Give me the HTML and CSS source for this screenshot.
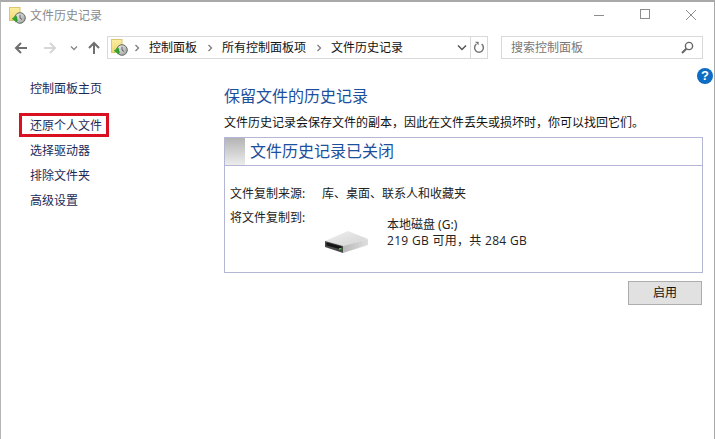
FILE: index.html
```html
<!DOCTYPE html>
<html lang="zh-CN">
<head>
<meta charset="utf-8">
<title>文件历史记录</title>
<link rel="stylesheet" href="styles.css">
</head>
<body>
<svg class="defs" width="0" height="0" aria-hidden="true">
  <defs>
    <linearGradient id="clk" x1="0" y1="0" x2="1" y2="1"><stop offset="0" stop-color="#f4f4f4"/><stop offset="1" stop-color="#9a9a9a"/></linearGradient>
    <linearGradient id="fold" x1="0" y1="0" x2="0" y2="1"><stop offset="0" stop-color="#fbeea0"/><stop offset="1" stop-color="#f0d775"/></linearGradient>
    <linearGradient id="drv" x1="0" y1="0" x2="1" y2="0"><stop offset="0" stop-color="#b9b9b9"/><stop offset="1" stop-color="#dedede"/></linearGradient>
    <linearGradient id="drvtop" x1="0" y1="0" x2="1" y2="1"><stop offset="0" stop-color="#f0f0f0"/><stop offset="1" stop-color="#d2d2d2"/></linearGradient>
    <symbol id="fh" viewBox="0 0 17 17">
      <rect x="0.5" y="0.5" width="10.5" height="13" fill="url(#fold)" stroke="#dcc56a"/>
      <circle cx="11" cy="11" r="5.3" fill="url(#clk)" stroke="#5f6b62"/>
      <path d="M11 7.8V11l2 1.4" fill="none" stroke="#555" stroke-width=".9"/>
      <path d="M7.5 8.5 3 12l3.2 1.2.4 2.3 2.2-1.6" fill="#2f9a2f"/>
      <path d="M3 11.8 6.6 8.6v5.8z" fill="#33a933"/>
    </symbol>
  </defs>
</svg>
<div class="window">
  <header class="titlebar">
    <svg class="app-icon" width="17" height="17"><use href="#fh"/></svg>
    <span class="title">文件历史记录</span>
    <div class="controls">
      <svg width="12" height="12" viewBox="0 0 12 12"><path d="M1 6.5h10" stroke="#8d8d8d" fill="none"/></svg>
      <svg width="12" height="12" viewBox="0 0 12 12"><rect x="1.5" y=".5" width="9" height="9" fill="none" stroke="#8d8d8d"/></svg>
      <svg width="12" height="12" viewBox="0 0 12 12"><path d="M1 1l10 10M11 1 1 11" stroke="#8d8d8d" fill="none"/></svg>
    </div>
  </header>
  <nav class="navbar">
    <div class="nav-buttons">
      <svg width="14" height="14" viewBox="0 0 14 14"><path d="M13 7H2M7 2 2 7l5 5" fill="none" stroke="#6f6f6f" stroke-width="2"/></svg>
      <svg class="forward" width="14" height="14" viewBox="0 0 14 14"><path d="M1 7h11M7 2l5 5-5 5" fill="none" stroke="#d6d6d6" stroke-width="2"/></svg>
      <svg class="recent" width="8" height="8" viewBox="0 0 8 8"><path d="M1 2.5 4 5.5l3-3" fill="none" stroke="#8a8a8a" stroke-width="1.4"/></svg>
      <svg class="up" width="14" height="14" viewBox="0 0 14 14"><path d="M7 13V2M2 7l5-5 5 5" fill="none" stroke="#6f6f6f" stroke-width="2"/></svg>
    </div>
    <div class="address">
      <svg class="crumb-icon" width="17" height="17"><use href="#fh"/></svg>
      <svg class="sep first" width="6" height="8" viewBox="0 0 6 8"><path d="M1.5 1l3 3-3 3" fill="none" stroke="#7d7d7d" stroke-width="1.3"/></svg>
      <span>控制面板</span>
      <svg class="sep" width="6" height="8" viewBox="0 0 6 8"><path d="M1.5 1l3 3-3 3" fill="none" stroke="#7d7d7d" stroke-width="1.3"/></svg>
      <span>所有控制面板项</span>
      <svg class="sep" width="6" height="8" viewBox="0 0 6 8"><path d="M1.5 1l3 3-3 3" fill="none" stroke="#7d7d7d" stroke-width="1.3"/></svg>
      <span>文件历史记录</span>
      <svg class="drop" width="10" height="8" viewBox="0 0 10 8"><path d="M1 1.5 5 5.5l4-4" fill="none" stroke="#555" stroke-width="1.5"/></svg>
      <div class="refresh">
        <svg width="12" height="13" viewBox="0 0 12 13"><path d="M8.6 3.2A4.4 4.4 0 1 1 3.4 3.2" fill="none" stroke="#777" stroke-width="1.5"/><path d="M2 .8h3.6v3.4z" fill="#777"/></svg>
      </div>
    </div>
    <div class="search">
      <span>搜索控制面板</span>
      <svg width="13" height="13" viewBox="0 0 13 13"><circle cx="8" cy="5" r="3.6" fill="none" stroke="#666" stroke-width="1.4"/><path d="M5.3 7.7 1 12" stroke="#666" stroke-width="2" fill="none"/></svg>
    </div>
  </nav>
  <div class="help-row"><span class="help">?</span></div>
  <div class="content">
    <aside class="sidebar">
      <a class="home">控制面板主页</a>
      <a class="current">还原个人文件</a>
      <a>选择驱动器</a>
      <a>排除文件夹</a>
      <a>高级设置</a>
    </aside>
    <main class="main">
      <h1>保留文件的历史记录</h1>
      <p class="intro">文件历史记录会保存文件的副本，因此在文件丢失或损坏时，你可以找回它们。</p>
      <section class="panel">
        <div class="panel-head">
          <span class="swatch"></span>
          <h2>文件历史记录已关闭</h2>
        </div>
        <div class="panel-body">
          <div class="row source"><span class="label">文件复制来源:</span><span>库、桌面、联系人和收藏夹</span></div>
          <div class="row-label">将文件复制到:</div>
          <div class="drive">
            <svg class="drive-icon" width="44" height="23" viewBox="0 0 44 23">
              <path d="M0 10 23 0l20 8-25 7z" fill="url(#drvtop)"/>
              <path d="M0 10l18 5v7L0 16z" fill="#4a4a4a"/>
              <path d="M1.5 11.5 16.5 15.6v3L1.500 14.500z" fill="#141414"/>
              <path d="M18 15l25-7v6l-25 8z" fill="url(#drv)"/>
              <rect x="14" y="17" width="2.500" height="1.500" fill="#4fc15a"/>
            </svg>
            <div class="drive-text">
              <div>本地磁盘 (G:)</div>
              <div class="space">219 GB 可用，共 284 GB</div>
            </div>
          </div>
        </div>
      </section>
      <div class="actions"><button class="enable" type="button">启用</button></div>
    </main>
  </div>
</div>
</body>
</html>
```

FILE: styles.css
```css
* { box-sizing: border-box; }
html, body { margin: 0; padding: 0; }
body {
  width: 715px;
  height: 439px;
  overflow: hidden;
  background: #fff;
  font-family: "Noto Sans", "Noto Sans CJK SC", sans-serif;
  font-size: 12px;
  line-height: 16px;
  color: #1a1a1a;
}
.defs { position: absolute; }
.window {
  height: 439px;
  border-top: 2px solid #a9a9a9;
  border-left: 1px solid #b5b5b5;
  border-right: 1px solid #a9a9a9;
}
.titlebar {
  height: 28px;
  display: flex;
  align-items: center;
  padding-left: 8px;
}
.app-icon { margin-top: -1px; }
.title { margin-left: 4px; color: #8a8a8a; }
.controls {
  margin-left: auto;
  display: flex;
  gap: 34px;
  padding-right: 17px;
  margin-top: -2px;
}
.navbar {
  height: 29px;
  display: flex;
  align-items: flex-start;
  padding-top: 6px;
}
.nav-buttons {
  width: 106px;
  height: 23px;
  display: flex;
  align-items: center;
  padding-left: 13px;
}
.forward { margin-left: 15px; }
.recent { margin-left: 13px; }
.up { margin-left: 9px; }
.address {
  width: 381px;
  height: 23px;
  border: 1px solid #d9d9d9;
  display: flex;
  align-items: center;
  padding-left: 3px;
  color: #111;
}
.sep { margin: 0 9.5px; }
.sep.first { margin: 0 9px 0 6px; }
.drop { margin-left: auto; margin-right: 3px; }
.refresh {
  width: 17px;
  height: 21px;
  border-left: 1px solid #d9d9d9;
  display: flex;
  align-items: center;
  justify-content: center;
}
.search {
  width: 202px;
  height: 23px;
  margin-left: 13px;
  border: 1px solid #d9d9d9;
  display: flex;
  align-items: center;
  justify-content: space-between;
  padding: 0 8px 0 9px;
  color: #777;
}
.help-row {
  height: 21px;
  display: flex;
  justify-content: flex-end;
  padding: 9px 1px 0 0;
}
.help {
  width: 16px;
  height: 16px;
  border-radius: 50%;
  background: #0d6cc4;
  color: #fff;
  font: bold 13px/16px "Liberation Sans", sans-serif;
  text-align: center;
}
.content { display: flex; }
.sidebar {
  width: 223px;
  padding-left: 29px;
  margin-top: -4px;
  display: flex;
  flex-direction: column;
}
.sidebar a {
  height: 25px;
  line-height: 25px;
  color: #1c2a57;
}
.sidebar .home { margin-bottom: 12px; }
.sidebar .current {
  position: relative;
}
.sidebar .current::after {
  content: "";
  position: absolute;
  box-sizing: border-box;
  left: -11px;
  top: 0;
  width: 90px;
  height: 24px;
  border: 3px solid #d8101f;
}
.main { width: 479px; }
h1 {
  margin: 5px 0 0;
  height: 22px;
  font-size: 16px;
  font-weight: 400;
  line-height: 22px;
  color: #1c4f9e;
}
.intro {
  margin: 8px 0 0;
  height: 16px;
  white-space: nowrap;
  color: #111;
}
.panel {
  margin-top: 6px;
  height: 136px;
  border: 1px solid #b5b5d6;
}
.panel-head {
  height: 28px;
  border-bottom: 1px solid #b5b5d6;
  display: flex;
  align-items: center;
}
.swatch {
  width: 20px;
  height: 27px;
  background: linear-gradient(#b4b4b4, #ececec);
}
h2 {
  margin: -2px 0 0 5px;
  font-size: 16px;
  font-weight: 400;
  line-height: 22px;
  color: #1c4f9e;
}
.panel-body { padding: 20px 0 0 5px; color: #222; }
.row { display: flex; }
.label { width: 92px; }
.row-label { margin-top: 8px; }
.drive {
  display: flex;
  margin-top: -9px;
}
.drive-icon { margin: 14px 0 0 95px; }
.drive-text { margin-left: 18px; }
.space {
  font-family: "Open Sans", "Noto Sans CJK SC", sans-serif;
  letter-spacing: .3px;
}
.actions {
  display: flex;
  justify-content: flex-end;
  margin-top: 8px;
  padding-right: 1px;
}
.enable {
  width: 74px;
  height: 24px;
  padding: 0;
  background: #e1e1e1;
  border: 1px solid #adadad;
  font: inherit;
  color: #111;
}
```
